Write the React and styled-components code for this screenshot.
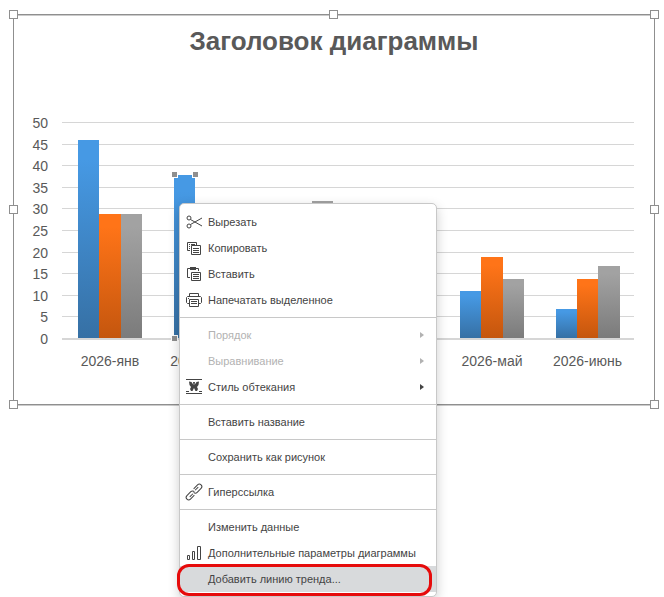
import React from "react";
import styled, { createGlobalStyle } from "styled-components";

const palette = {
    frame: "#8f8f8f",
    frameLight: "#cbcbcb",
    grid: "#d6d6d6",
    label: "#595959",
    text: "#444444",
    disabled: "#b2b2b2",
    border: "#c8c8c8",
    hover: "#d8dadc",
    mark: "#e60b0b",
};

const GlobalStyle = createGlobalStyle`
    body {
        margin: 0;
        background: #fff;
        font-family: "Liberation Sans", Arial, sans-serif;
    }
`;

const Page = styled.main`
    position: relative;
    display: flow-root;
    min-height: 100vh;
`;

const ChartFrame = styled.section`
    position: relative;
    margin: 14px 9px 0 13px;
    border: 1px solid ${palette.frame};
    box-shadow: 0 1px 0 ${palette.frameLight}, inset 0 1px 0 ${palette.frameLight};
`;

const ChartTitle = styled.h1`
    margin: 0;
    padding: 10px 0 18px;
    font-size: 26px;
    line-height: 32px;
    font-weight: bold;
    text-align: center;
    color: ${palette.label};
`;

const Plot = styled.svg`
    display: block;
    width: 100%;
    height: auto;
    text {
        font-size: 14px;
        fill: ${palette.label};
    }
`;

const Handle = styled.span`
    position: absolute;
    box-sizing: border-box;
    width: 9px;
    height: 9px;
    border: 1px solid ${palette.frame};
    background: #fff;
    left: ${({ $x }) => positions[$x]};
    top: ${({ $y }) => positions[$y]};
`;

const Menu = styled.div`
    position: absolute;
    left: 179px;
    top: 203px;
    box-sizing: border-box;
    width: 258px;
    padding: 5px 0 4px;
    border: 1px solid ${palette.border};
    border-radius: 5px;
    background: #fff;
    box-shadow: 0 4px 12px rgba(0, 0, 0, 0.2);
`;

const MenuItem = styled.button`
    position: relative;
    display: flex;
    align-items: center;
    gap: 4px;
    width: 100%;
    height: 26px;
    margin: 0;
    padding: 0 12px 0 4px;
    border: 0;
    background: ${({ $active }) => ($active ? palette.hover : "transparent")};
    font-family: inherit;
    font-size: 11px;
    text-align: left;
    white-space: nowrap;
    color: ${palette.text};
    &:disabled {
        color: ${palette.disabled};
    }
`;

const Label = styled.span`
    flex: 1;
`;

const Icon = styled.svg`
    flex: none;
    width: 20px;
    height: 20px;
    fill: none;
    stroke: ${palette.text};
`;

const Arrow = styled.svg`
    flex: none;
    width: 4px;
    height: 6px;
    fill: currentColor;
`;

const Divider = styled.hr`
    height: 1px;
    margin: 4px 0;
    border: 0;
    background: ${palette.border};
`;

// red outline around the highlighted command
const Mark = styled.span`
    position: absolute;
    top: -2px;
    right: 4px;
    bottom: -4px;
    left: -3px;
    border: 3px solid ${palette.mark};
    border-radius: 12px;
    pointer-events: none;
`;

const positions = {
    start: "-5px",
    middle: "calc(50% - 5px)",
    end: "calc(100% - 4px)",
};

const handles = [
    ["start", "start"],
    ["middle", "start"],
    ["end", "start"],
    ["start", "middle"],
    ["end", "middle"],
    ["start", "end"],
    ["middle", "end"],
    ["end", "end"],
];

const months = [
    { name: "2026-янв", values: [46, 29, 29] },
    { name: "2026-февр", values: [38, 24, 27] },
    { values: [25, 21, 32] },
    { values: [18, 22, 20] },
    { name: "2026-май", values: [11, 19, 14] },
    { name: "2026-июнь", values: [7, 14, 17] },
];

const series = [
    { id: "blue", from: "#4699e4", to: "#3670a4" },
    { id: "orange", from: "#ff7418", to: "#c4560e" },
    { id: "gray", from: "#a2a2a2", to: "#7b7b7b" },
];

const ticks = [50, 45, 40, 35, 30, 25, 20, 15, 10, 5, 0];
const BASE = 263;
const UNIT = 4.32;

const gridY = (value) => Math.round(BASE - value * UNIT);
const barY = (value) => Math.round(BASE + 1 - value * UNIT);
const center = (index) => 96 + index * 95.5;
const barX = (index, n) => Math.round(center(index) - 32 + (n * 64) / 3);

const Chart = () => (
    <Plot viewBox="0 0 640 329" role="img" aria-label="Заголовок диаграммы">
        <defs>
            {series.map((s) => (
                <linearGradient key={s.id} id={s.id} x1="0" y1="0" x2="0" y2="1">
                    <stop offset="0.1" stopColor={s.from} />
                    <stop offset="1" stopColor={s.to} />
                </linearGradient>
            ))}
        </defs>
        {ticks.map((tick) => (
            <g key={tick}>
                <rect x="48" y={gridY(tick)} width="572" height={tick ? 1 : 2} fill={palette.grid} />
                <text x="34" y={gridY(tick) + 6} textAnchor="end">{tick}</text>
            </g>
        ))}
        {months.map((month, i) => (
            <g key={i}>
                {month.values.map((value, n) => (
                    <rect
                        key={series[n].id}
                        x={barX(i, n)}
                        y={barY(value)}
                        width={barX(i, n + 1) - barX(i, n)}
                        height={BASE - barY(value)}
                        fill={`url(#${series[n].id})`}
                    />
                ))}
                {month.name && <text x={center(i)} y="291" textAnchor="middle">{month.name}</text>}
            </g>
        ))}
        {/* selected point */}
        <g fill={palette.frame} stroke="#fff">
            <rect x="157.5" y="96.5" width="6" height="6" />
            <rect x="178.5" y="96.5" width="6" height="6" />
            <rect x="157.5" y="260.5" width="6" height="6" />
        </g>
    </Plot>
);

const icons = {
    cut: (
        <>
            <circle cx="5" cy="6" r="2" />
            <circle cx="5" cy="14" r="2" />
            <path d="M6.5 7.5 10 9.5 18 14M6.5 12.5 10 10.5 18 6" />
        </>
    ),
    copy: (
        <>
            <path d="M6 12.5H3.5V4.5H12.5V7M5 6.5H6M7 6.5H11M5 8.5H6M5 10.5H6" />
            <path d="M7.5 7.5H16.5V16.5H7.5ZM9 10.5H15M9 12.5H15M9 14.5H15" />
        </>
    ),
    paste: (
        <>
            <path d="M6 13.5H3.5V4.5H6M12 4.5H14.5V7" />
            <path d="M6 3H12V6H6Z" fill={palette.text} stroke="none" />
            <path d="M7.5 8.5H16.5V16.5H7.5ZM9 10.5H15M9 12.5H15M9 14.5H15" />
        </>
    ),
    print: (
        <>
            <path d="M5.5 6V3.5H14.5V6" />
            <path d="M5 13.5H3.5L2.5 12.5V7.5L3.5 6.5H16.5L17.5 7.5V12.5L16.5 13.5H15" />
            <path d="M5.5 9.5H14.5V16.5H5.5ZM7 11.5H13M7 13.5H13M4 8.5H5" />
        </>
    ),
    wrap: (
        <>
            <path d="M2 2.5H18M2 16.5H18M2 14.5H5M15 14.5H18" />
            <path
                d="M5 4.5 7.5 5 9.5 8 9 5H11L10.5 8 12.5 5 15 4.5 14.5 8 13 10 14 12 13 14H11.5L10 11 8.5 14H7L6 12 7 10 5.5 8Z"
                fill={palette.text}
                stroke="none"
            />
        </>
    ),
    link: (
        <g transform="rotate(-45 10 10)">
            <path d="M8 12.5H2.5A2.5 2.5 0 0 1 2.5 7.5H8A2.5 2.5 0 0 1 10.5 10M8 10.5H3.5" />
            <path d="M12 7.5H17.5A2.5 2.5 0 0 1 17.5 12.5H12A2.5 2.5 0 0 1 9.5 10M12 9.5H16.5" />
        </g>
    ),
    chart: <path d="M3.5 12.5H5.5V16.5H3.5ZM8.5 8.5H10.5V16.5H8.5ZM13.5 3.5H16.5V16.5H13.5Z" />,
};

const groups = [
    [
        { label: "Вырезать", icon: "cut" },
        { label: "Копировать", icon: "copy" },
        { label: "Вставить", icon: "paste" },
        { label: "Напечатать выделенное", icon: "print" },
    ],
    [
        { label: "Порядок", submenu: true, disabled: true },
        { label: "Выравнивание", submenu: true, disabled: true },
        { label: "Стиль обтекания", icon: "wrap", submenu: true },
    ],
    [{ label: "Вставить название" }],
    [{ label: "Сохранить как рисунок" }],
    [{ label: "Гиперссылка", icon: "link" }],
    [
        { label: "Изменить данные" },
        { label: "Дополнительные параметры диаграммы", icon: "chart" },
        { label: "Добавить линию тренда...", active: true },
    ],
];

const ContextMenu = () => (
    <Menu role="menu">
        {groups.map((items, i) => (
            <React.Fragment key={items[0].label}>
                {i > 0 && <Divider />}
                {items.map(({ label, icon, submenu, disabled, active }) => (
                    <MenuItem key={label} type="button" role="menuitem" disabled={disabled} $active={active}>
                        <Icon viewBox="0 0 20 20" aria-hidden="true">{icons[icon]}</Icon>
                        <Label>{label}</Label>
                        {submenu && (
                            <Arrow viewBox="0 0 4 6" aria-hidden="true">
                                <path d="M0 0 4 3 0 6Z" />
                            </Arrow>
                        )}
                        {active && <Mark />}
                    </MenuItem>
                ))}
            </React.Fragment>
        ))}
    </Menu>
);

const App = () => {
    return (
        <>
            <GlobalStyle />
            <Page>
                <ChartFrame>
                    <ChartTitle>Заголовок диаграммы</ChartTitle>
                    <Chart />
                    {handles.map(([x, y]) => (
                        <Handle key={x + y} $x={x} $y={y} />
                    ))}
                </ChartFrame>
                <ContextMenu />
            </Page>
        </>
    );
};

export default App;
